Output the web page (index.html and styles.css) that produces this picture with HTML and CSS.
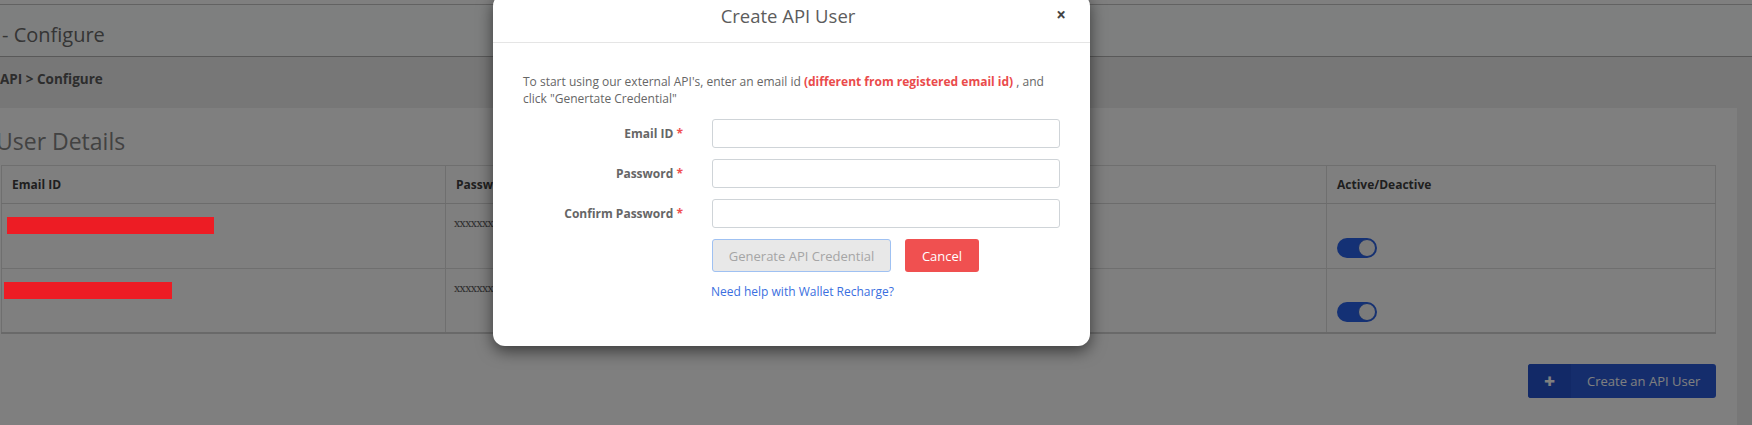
FILE: index.html
```html
<!DOCTYPE html>
<html>
<head>
<meta charset="utf-8">
<title>API - Configure</title>
<link rel="stylesheet" href="styles.css">
</head>
<body>
<div class="page">
  <div class="topstrip"></div>
  <div class="page-heading"><h2 class="page-title">- Configure</h2></div>
  <div class="crumb-band"><span class="crumb">API &gt; Configure</span></div>
  <div class="panel">
    <h3 class="panel-title">User Details</h3>
    <table class="users">
      <colgroup><col class="c-email"><col class="c-pass"><col class="c-active"></colgroup>
      <thead>
        <tr><th>Email ID</th><th>Password</th><th>Active/Deactive</th></tr>
      </thead>
      <tbody>
        <tr>
          <td><span class="redact"></span></td>
          <td class="pass">xxxxxxxxxx</td>
          <td class="toggle-cell"><span class="toggle"><span class="knob"></span></span></td>
        </tr>
        <tr>
          <td><span class="redact"></span></td>
          <td class="pass">xxxxxxxxxx</td>
          <td class="toggle-cell"><span class="toggle"><span class="knob"></span></span></td>
        </tr>
      </tbody>
    </table>
    <div class="actions">
      <button class="create-btn"><span class="plus">+</span><span class="create-label">Create an API User</span></button>
    </div>
  </div>
</div>

<div class="backdrop"></div>
<span class="redact-over r1"></span>
<span class="redact-over r2"></span>

<div class="modal">
  <div class="modal-header">
    <span></span>
    <h4 class="modal-title">Create API User</h4>
    <span class="close">&times;</span>
  </div>
  <div class="modal-body">
    <p class="intro">To start using our external API's, enter an email id <strong class="warn">(different from registered email id)</strong> , and click "Genertate Credential"</p>
    <div class="form">
      <label class="lbl">Email ID <span class="req">*</span></label>
      <input class="field" type="text">
      <label class="lbl">Password <span class="req">*</span></label>
      <input class="field" type="password">
      <label class="lbl">Confirm Password <span class="req">*</span></label>
      <input class="field" type="password">
      <span></span>
      <div class="btn-row">
        <button class="btn-gen">Generate API Credential</button>
        <button class="btn-cancel">Cancel</button>
      </div>
      <span></span>
      <a class="help" href="#">Need help with Wallet Recharge?</a>
    </div>
  </div>
</div>
</body>
</html>
```

FILE: styles.css
```css
* { box-sizing: border-box; }
html, body { margin: 0; padding: 0; }
body {
  width: 1752px;
  height: 425px;
  overflow: hidden;
  background: #eeeeee;
  font-family: "Open Sans", "DejaVu Sans", sans-serif;
  color: #676a6c;
  position: relative;
}
.page { width: 1752px; }
.topstrip {
  height: 5px;
  background: #ffffff;
  border-bottom: 1px solid #c4c4c4;
}
.page-heading {
  height: 52px;
  background: #fdfffe;
  border-bottom: 1px solid #b2b2b2;
  display: flex;
  align-items: center;
  padding-left: 2px;
}
.page-title {
  margin: 0;
  font-weight: 400;
  font-size: 20px;
  color: #6a6a6a;
  padding-top: 8px;
}
.crumb-band {
  height: 51px;
  background: #eeeeee;
  display: flex;
  align-items: center;
  padding-left: 0;
}
.crumb {
  font-weight: 700;
  font-size: 13.5px;
  color: #5a5a5a;
  padding-bottom: 7px;
}
.panel {
  background: #ffffff;
  width: 1737px;
  height: 317px;
  padding: 0 21px 0 1px;
}
.panel-title {
  margin: 0 0 0 -5px;
  height: 57px;
  display: flex;
  align-items: center;
  padding-top: 8px;
  font-weight: 400;
  font-size: 23px;
  color: #848484;
}
.users {
  width: 100%;
  border-collapse: collapse;
  border: 1px solid #dedede;
  border-bottom: 2px solid #d2d2d2;
  font-size: 11px;
}
.c-email { width: 444px; }
.c-active { width: 389px; }
.users th {
  height: 38px;
  text-align: left;
  font-weight: 700;
  font-size: 12px;
  color: #3e3e3e;
  padding: 0 10px;
  border: 1px solid #dedede;
  border-bottom: 1px solid #d8d8d8;
  vertical-align: middle;
}
.users td {
  height: 65px;
  border: 1px solid #dedede;
  vertical-align: top;
  padding: 12px 10px 0 7px;
}
.users tbody tr:nth-child(2) td { height: 64px; }
.users td.pass {
  font-family: "DejaVu Serif", serif;
  font-size: 11px;
  color: #5e5e5e;
  letter-spacing: -0.6px;
  padding: 13px 8px 0 8px;
}
.users td.toggle-cell { padding: 34px 10px 0 10px; }
.users tbody tr:nth-child(2) td.toggle-cell { padding-top: 33px; }
.redact { display: block; height: 17px; }
.toggle {
  display: inline-block;
  width: 40px;
  height: 20px;
  border-radius: 10px;
  background: #2862ea;
  position: relative;
}
.knob {
  position: absolute;
  right: 1px;
  top: 1px;
  width: 18px;
  height: 18px;
  border-radius: 50%;
  background: #f6f6f6;
  border: 1px solid #2a5ed8;
}
.actions {
  display: flex;
  justify-content: flex-end;
  padding-top: 30px;
}
.create-btn {
  display: flex;
  align-items: stretch;
  height: 34px;
  width: 188px;
  padding: 0;
  border: none;
  border-radius: 3px;
  background: #2a5bd9;
  color: #ffffff;
  font-family: "Open Sans", "DejaVu Sans", sans-serif;
  font-size: 13px;
  overflow: hidden;
}
.plus {
  width: 43px;
  background: #2453cf;
  display: flex;
  align-items: center;
  justify-content: center;
  font-weight: 800;
  font-size: 19px;
}
.create-label {
  display: flex;
  align-items: center;
  padding-left: 16px;
}
.backdrop {
  position: absolute;
  inset: 0;
  background: rgba(0, 0, 0, 0.5);
  z-index: 10;
}
.redact-over {
  position: absolute;
  background: #ed1c24;
  height: 17px;
  z-index: 11;
}
.r1 { left: 7px; top: 217px; width: 207px; }
.r2 { left: 4px; top: 282px; width: 168px; }
.modal {
  position: absolute;
  left: 493px;
  top: -6px;
  width: 597px;
  height: 352px;
  background: #ffffff;
  border-radius: 12px;
  box-shadow: 0 5px 16px rgba(0, 0, 0, 0.55);
  z-index: 20;
}
.modal-header {
  height: 49px;
  border-bottom: 1px solid #e5e5e5;
  display: grid;
  grid-template-columns: 1fr auto 1fr;
  align-items: start;
  padding: 10px 24px 0 25px;
}
.modal-title {
  margin: 0;
  font-size: 18.5px;
  font-weight: 400;
  line-height: 24px;
  color: #5c5c5c;
  padding-right: 8px;
}
.close {
  justify-self: end;
  font-size: 17px;
  font-weight: 700;
  line-height: 24px;
  color: #444;
  margin-top: -1px;
}
.modal-body {
  padding: 30px 30px 0 30px;
}
.intro {
  margin: 0;
  font-size: 12px;
  line-height: 17px;
  color: #666;
}
.warn { color: #ea4b4b; }
.form {
  display: grid;
  grid-template-columns: 160px 348px;
  column-gap: 29px;
  row-gap: 11px;
  align-items: center;
  margin-top: 12px;
}
.lbl {
  text-align: right;
  font-weight: 700;
  font-size: 12px;
  color: #666;
}
.req { color: #f05050; }
.field {
  height: 29px;
  width: 348px;
  border: 1px solid #cfd4d8;
  border-radius: 3px;
  background: #fff;
}
.btn-row {
  display: flex;
  gap: 14px;
}
.btn-gen {
  height: 33px;
  width: 179px;
  background: #e8e8e8;
  border: 1px solid #9fc1f2;
  border-radius: 3px;
  color: #a5a5a5;
  font-family: "Open Sans", "DejaVu Sans", sans-serif;
  font-size: 13px;
  padding: 0;
}
.btn-cancel {
  height: 33px;
  width: 74px;
  background: #f05050;
  border: none;
  border-radius: 3px;
  color: #ffffff;
  font-family: "Open Sans", "DejaVu Sans", sans-serif;
  font-size: 13px;
  padding: 0;
}
.help {
  font-size: 12px;
  line-height: 17px;
  color: #3b6fe0;
  text-decoration: none;
  margin-left: -1px;
}
```
